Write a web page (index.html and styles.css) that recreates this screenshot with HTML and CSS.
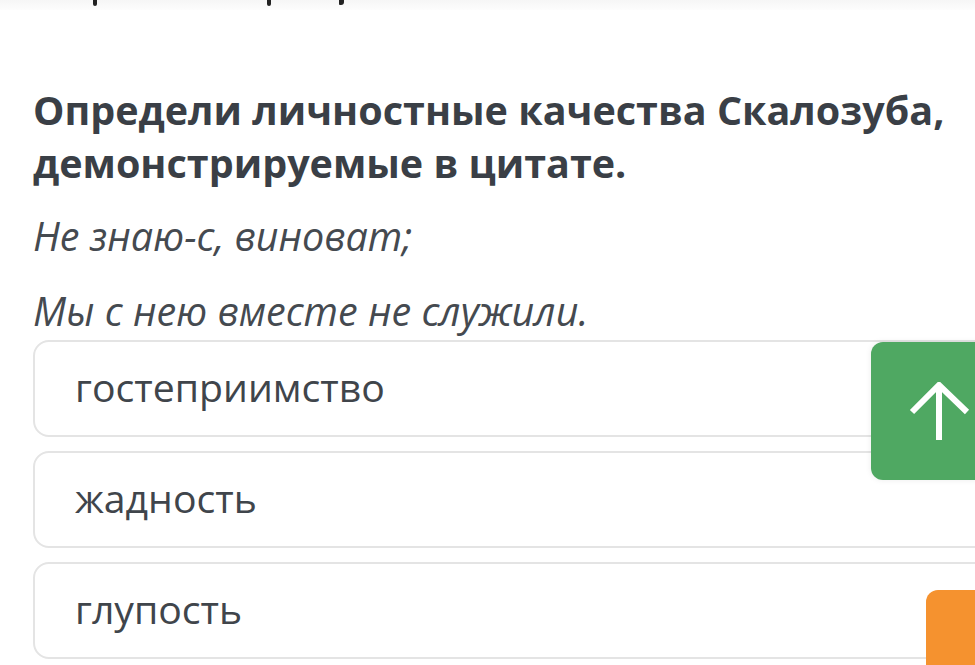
FILE: index.html
```html
<!DOCTYPE html>
<html lang="ru">
<head>
<meta charset="utf-8">
<link rel="stylesheet" href="styles.css">
</head>
<body>
<div class="prev"><span class="mark m1"></span><span class="mark m2"></span><span class="mark m3"></span></div>
<main class="quiz">
  <h1 class="question">Определи личностные качества Скалозуба, демонстрируемые в цитате.</h1>
  <p class="quote">Не знаю-с, виноват;</p>
  <p class="quote">Мы с нею вместе не служили.</p>
  <div class="options">
    <div class="option">гостеприимство</div>
    <div class="option">жадность</div>
    <div class="option">глупость</div>
  </div>
</main>
<div class="up-btn">
  <svg width="62" height="60" viewBox="0 0 62 60"><path d="M3 30 L30 3 L58 30 M30 3 L30 58" fill="none" stroke="#fff" stroke-width="6" stroke-linecap="butt" stroke-linejoin="miter"/></svg>
</div>
<div class="orange-btn"></div>
</body>
</html>
```
FILE: styles.css
```css
html, body {
  margin: 0;
  padding: 0;
  background: #fff;
  overflow: hidden;
}
body {
  width: 975px;
  height: 665px;
  position: relative;
  font-family: "Open Sans", "Noto Sans", sans-serif;
  color: #3b4047;
}
.prev {
  height: 10px;
  background: linear-gradient(#f6f6f6, #fdfdfd);
  display: flex;
  align-items: flex-start;
}
.mark {
  display: block;
  width: 4px;
  height: 6px;
  background: #222;
  border-radius: 0 0 2px 2px;
}
.m1 { margin-left: 93px; }
.m2 { margin-left: 170px; }
.m3 { margin-left: 68px; width: 5px; height: 5px; border-radius: 0 0 3px 1px; }
.quiz {
  padding-left: 33px;
}
.question {
  margin: 74px 0 0 0;
  font-size: 39.5px;
  line-height: 53px;
  font-weight: 700;
  color: #3a3f46;
}
.quote {
  margin: 18px 0 0 0;
  font-style: italic;
  font-size: 39.5px;
  line-height: 56px;
  color: #454a50;
}
.quote + .quote {
  margin-top: 19px;
}
.options {
  display: flex;
  flex-direction: column;
  gap: 14px;
  margin-top: 1px;
  width: 980px;
}
.option {
  box-sizing: border-box;
  height: 97px;
  border: 2px solid #e4e4e4;
  border-radius: 16px;
  padding-left: 40px;
  display: flex;
  align-items: center;
  font-size: 39.2px;
  color: #40454b;
  padding-bottom: 4px;
}
.up-btn {
  position: absolute;
  left: 871px;
  top: 342px;
  width: 120px;
  height: 138px;
  background: #4fa862;
  border-radius: 12px;
  box-sizing: border-box;
  padding: 40px 0 0 38px;
  box-shadow: 0 0 6px rgba(0,0,0,0.08);
}
.up-btn svg {
  display: block;
}
.orange-btn {
  position: absolute;
  left: 926px;
  top: 590px;
  width: 80px;
  height: 100px;
  background: #f5922f;
  border-radius: 12px;
}
```
